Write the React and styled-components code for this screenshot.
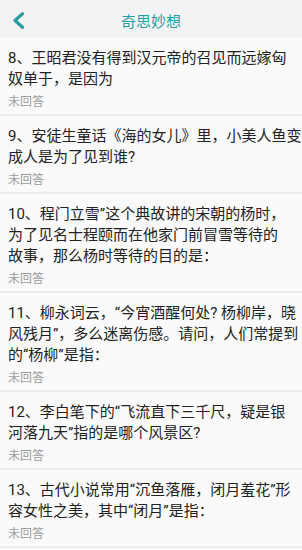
import React from 'react';
import styled, { createGlobalStyle } from 'styled-components';

const teal = '#2a9d9f';

const GlobalStyle = createGlobalStyle`
  html, body {
    margin: 0;
    padding: 0;
    background: #fafafa;
  }
  body {
    font-family: Roboto, "Noto Sans CJK SC", sans-serif;
    -webkit-font-smoothing: antialiased;
  }
`;

const Page = styled.div`
  width: 302px;
  min-height: 550px;
  background: #fafafa;
`;

const Header = styled.header`
  display: grid;
  grid-template-columns: 44px 1fr 44px;
  align-items: center;
  box-sizing: border-box;
  height: 38px;
  padding-top: 3px;
  background: #f2f3f5;
`;

const BackButton = styled.button`
  display: flex;
  align-items: center;
  justify-content: flex-start;
  padding: 0 0 0 12px;
  height: 100%;
  border: none;
  background: transparent;
  cursor: pointer;
`;

const Title = styled.h1`
  margin: 0;
  text-align: center;
  font-size: 15px;
  font-weight: 400;
  color: ${teal};
`;

const List = styled.ul`
  list-style: none;
  margin: 0;
  padding: 0;
`;

// 2-line card = 78px, 3-line card = 99px
const Item = styled.li`
  display: flex;
  flex-direction: column;
  gap: 4px;
  padding: 10px 0 3px 8px;
  border-bottom: 2px solid #ebebeb;
`;

const Question = styled.div`
  font-size: 15px;
  line-height: 21px;
  color: #222;
`;

const Line = styled.span`
  display: block;
  white-space: nowrap;
`;

const Status = styled.div`
  font-size: 12px;
  line-height: 17px;
  color: #9a9a9a;
`;

const questions = [
  ['8、王昭君没有得到汉元帝的召见而远嫁匈', '奴单于，是因为'],
  ['9、安徒生童话《海的女儿》里，小美人鱼变', '成人是为了见到谁?'],
  ['10、程门立雪”这个典故讲的宋朝的杨时，', '为了见名士程颐而在他家门前冒雪等待的', '故事，那么杨时等待的目的是：'],
  ['11、柳永词云，“今宵酒醒何处? 杨柳岸，晓', '风残月”，多么迷离伤感。请问，人们常提到', '的“杨柳”是指：'],
  ['12、李白笔下的“飞流直下三千尺，疑是银', '河落九天”指的是哪个风景区?'],
  ['13、古代小说常用“沉鱼落雁，闭月羞花”形', '容女性之美，其中“闭月”是指：'],
];

const ChevronLeft = () => (
  <svg width="13" height="17" viewBox="0 0 13 17" fill="none">
    <polyline
      points="10.5,1.8 3,8.5 10.5,15.2"
      stroke={teal}
      strokeWidth="3.2"
      strokeLinecap="round"
      strokeLinejoin="round"
    />
  </svg>
);

const App = () => (
  <Page>
    <GlobalStyle />
    <Header>
      <BackButton aria-label="返回">
        <ChevronLeft />
      </BackButton>
      <Title>奇思妙想</Title>
      <span />
    </Header>
    <List>
      {questions.map((lines) => (
        <Item key={lines[0]}>
          <Question>
            {lines.map((l) => <Line key={l}>{l}</Line>)}
          </Question>
          <Status>未回答</Status>
        </Item>
      ))}
    </List>
  </Page>
);

export default App;
